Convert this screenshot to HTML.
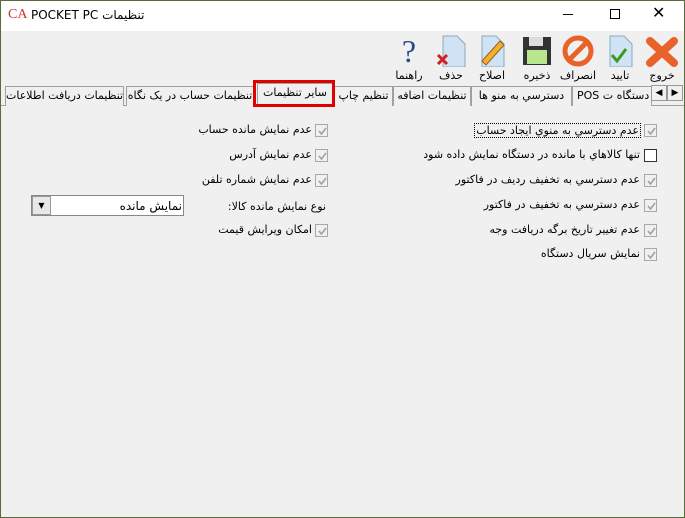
<!DOCTYPE html>
<html><head><meta charset="utf-8"><style>
*{margin:0;padding:0;box-sizing:border-box}
body{width:685px;height:518px;overflow:hidden;background:#f0f0f0;font-family:"DejaVu Sans","Liberation Sans",sans-serif;font-size:11px;color:#000;position:relative}
.win{position:absolute;left:0;top:0;width:685px;height:518px;border:1px solid #5a6b3a}
.title{position:absolute;left:1px;top:1px;width:683px;height:30px;background:#fff}
.a{position:absolute;white-space:nowrap}
.tb{position:absolute;top:35px;width:36px;text-align:center}
.tb span{position:absolute;top:34px;left:-10px;width:56px;text-align:center;font-size:11px}
.tab{position:absolute;top:86px;height:20px;border:1px solid #a0a0a0;border-bottom:none;background:#f0f0f0;text-align:center;line-height:18px;font-size:11px;white-space:nowrap;overflow:hidden}
.cb{position:absolute;width:13px;height:13px;border:1px solid #a8a8a8;background:#f0f0f0}
.cb svg{position:absolute;left:1px;top:1px}
.cb.w{background:#fff;border-color:#333}
.lb{position:absolute;text-align:right;white-space:nowrap;direction:rtl}
</style></head><body>
<div class="win"></div>
<div class="title"></div>
<div class="a" style="left:8px;top:7px;color:#d03030;font-size:14px;font-family:'Liberation Serif',serif">CA</div>
<div class="a" style="left:31px;top:8px;font-size:12px">POCKET PC تنظیمات</div>
<div class="a" style="left:563px;top:14px;width:10px;height:1px;background:#000"></div>
<div class="a" style="left:610px;top:9px;width:10px;height:10px;border:1px solid #000"></div>
<div class="a" style="left:652px;top:3px;font-size:16px">✕</div>

<!-- toolbar -->
<div class="tb" style="left:644px"><svg width="36" height="32"><path d="M6 6L30 28M30 6L6 28" stroke="#e8622a" stroke-width="8" stroke-linecap="round"/></svg><span>خروج</span></div>
<div class="tb" style="left:602px"><svg width="36" height="32"><path d="M8 1h14l8 8v23H8z" fill="#cfe3f5" stroke="#8ab"/><path d="M10 20l5 6 9-12" stroke="#3a9a20" stroke-width="3" fill="none"/></svg><span>تایید</span></div>
<div class="tb" style="left:560px"><svg width="36" height="32"><circle cx="18" cy="16" r="13" fill="none" stroke="#e8622a" stroke-width="5"/><path d="M9 25L27 7" stroke="#e8622a" stroke-width="5"/></svg><span>انصراف</span></div>
<div class="tb" style="left:519px"><svg width="36" height="32"><rect x="4" y="2" width="28" height="28" fill="#333"/><rect x="10" y="2" width="14" height="9" fill="#ddd"/><rect x="8" y="15" width="20" height="14" fill="#b9e58f"/></svg><span>ذخیره</span></div>
<div class="tb" style="left:474px"><svg width="36" height="32"><path d="M8 1h14l8 8v23H8z" fill="#cfe3f5" stroke="#8ab"/><path d="M8 26L26 6l4 4L12 30z" fill="#f0b030" stroke="#a06010"/></svg><span>اصلاح</span></div>
<div class="tb" style="left:433px"><svg width="36" height="32"><path d="M10 1h14l8 8v23H10z" fill="#cfe3f5" stroke="#8ab"/><path d="M5 20l9 9M14 20l-9 9" stroke="#d02020" stroke-width="3"/></svg><span>حذف</span></div>
<div class="tb" style="left:391px"><div style="font-size:32px;color:#2a4a8a;font-family:'Liberation Serif',serif;text-align:center;line-height:32px">?</div><span>راهنما</span></div>

<!-- tabs -->
<div class="a" style="left:1px;top:105px;width:683px;height:1px;background:#a0a0a0"></div>
<div class="tab" style="left:5px;width:119px">تنظیمات دریافت اطلاعات</div>
<div class="tab" style="left:126px;width:128px">تنظیمات حساب در یک نگاه</div>
<div class="tab" style="left:393px;width:78px">تنظیمات اضافه</div>
<div class="tab" style="left:471px;width:101px">دسترسي به منو ها</div>
<div class="tab" style="left:572px;width:80px;text-align:left;padding-left:4px">POS دستگاه ت</div>
<div class="tab" style="left:334px;width:59px">تنظیم چاپ</div>
<div class="tab" style="left:257px;top:83px;height:23px;width:76px;background:#f0f0f0;border-color:#a0a0a0">سایر تنظیمات</div>
<div class="a" style="left:253px;top:80px;width:82px;height:27px;border:3px solid #e00000"></div>
<div class="a" style="left:651px;top:85px;width:16px;height:16px;border:1px solid #999;background:#f0f0f0;font-size:9px;text-align:center;line-height:14px">◀</div>
<div class="a" style="left:667px;top:85px;width:16px;height:16px;border:1px solid #999;background:#f0f0f0;font-size:9px;text-align:center;line-height:14px">▶</div>

<!-- right column -->
<div class="cb" style="left:644px;top:124px"><svg width="11" height="11"><path d="M2 5l2.5 3L9 2" stroke="#a0a0a0" stroke-width="1.6" fill="none"/></svg></div>
<div class="lb" style="right:44px;top:123px;border:1px dotted #000;padding:0 1px">عدم دسترسي به منوي ایجاد حساب</div>
<div class="cb w" style="left:644px;top:149px"></div>
<div class="lb" style="right:45px;top:148px">تنها كالاهاي با مانده در دستگاه نمایش داده شود</div>
<div class="cb" style="left:644px;top:174px"><svg width="11" height="11"><path d="M2 5l2.5 3L9 2" stroke="#a0a0a0" stroke-width="1.6" fill="none"/></svg></div>
<div class="lb" style="right:45px;top:173px">عدم دسترسي به تخفیف ردیف در فاكتور</div>
<div class="cb" style="left:644px;top:199px"><svg width="11" height="11"><path d="M2 5l2.5 3L9 2" stroke="#a0a0a0" stroke-width="1.6" fill="none"/></svg></div>
<div class="lb" style="right:45px;top:198px">عدم دسترسي به تخفیف در فاكتور</div>
<div class="cb" style="left:644px;top:224px"><svg width="11" height="11"><path d="M2 5l2.5 3L9 2" stroke="#a0a0a0" stroke-width="1.6" fill="none"/></svg></div>
<div class="lb" style="right:45px;top:223px">عدم تغییر تاریخ برگه دریافت وجه</div>
<div class="cb" style="left:644px;top:248px"><svg width="11" height="11"><path d="M2 5l2.5 3L9 2" stroke="#a0a0a0" stroke-width="1.6" fill="none"/></svg></div>
<div class="lb" style="right:45px;top:247px">نمایش سریال دستگاه</div>

<!-- left column -->
<div class="cb" style="left:315px;top:124px"><svg width="11" height="11"><path d="M2 5l2.5 3L9 2" stroke="#a0a0a0" stroke-width="1.6" fill="none"/></svg></div>
<div class="lb" style="right:373px;top:123px">عدم نمایش مانده حساب</div>
<div class="cb" style="left:315px;top:149px"><svg width="11" height="11"><path d="M2 5l2.5 3L9 2" stroke="#a0a0a0" stroke-width="1.6" fill="none"/></svg></div>
<div class="lb" style="right:373px;top:148px">عدم نمایش آدرس</div>
<div class="cb" style="left:315px;top:174px"><svg width="11" height="11"><path d="M2 5l2.5 3L9 2" stroke="#a0a0a0" stroke-width="1.6" fill="none"/></svg></div>
<div class="lb" style="right:373px;top:173px">عدم نمایش شماره تلفن</div>
<div class="lb" style="right:359px;top:200px">نوع نمایش مانده كالا:</div>
<div class="a" style="left:31px;top:195px;width:153px;height:21px;background:#fff;border:1px solid #888"></div>
<div class="a" style="left:32px;top:196px;width:19px;height:19px;border:1px solid #999;background:#e8e8e8;font-size:8px;text-align:center;line-height:17px">▼</div>
<div class="lb" style="right:503px;top:199px;font-size:12px">نمایش مانده</div>
<div class="cb" style="left:315px;top:224px"><svg width="11" height="11"><path d="M2 5l2.5 3L9 2" stroke="#a0a0a0" stroke-width="1.6" fill="none"/></svg></div>
<div class="lb" style="right:373px;top:223px">امكان ویرایش قیمت</div>
</body></html>
